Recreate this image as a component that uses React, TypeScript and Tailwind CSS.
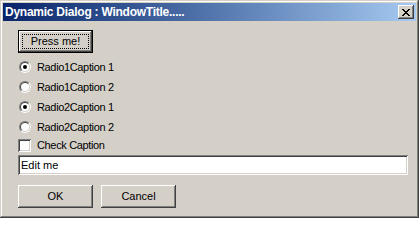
import React, { useState } from "react";

const font = { fontFamily: '"Liberation Sans", Arial, sans-serif' };

const raised =
  "shadow-[inset_-1px_-1px_0_#404040,inset_1px_1px_0_#ffffff,inset_-2px_-2px_0_#808080]";
const sunken =
  "shadow-[inset_1px_1px_0_#808080,inset_-1px_-1px_0_#ffffff,inset_2px_2px_0_#404040,inset_-2px_-2px_0_#d4d0c8]";

const Radio = ({ checked, label }: { checked: boolean; label: string }) => (
  <div className="flex items-center h-[20px]">
    <span className="ml-[1px] w-[12px] h-[12px] rounded-full border border-t-[#808080] border-l-[#808080] border-b-white border-r-white flex">
      <span className="w-[10px] h-[10px] rounded-full border border-t-[#404040] border-l-[#404040] border-b-[#d4d0c8] border-r-[#d4d0c8] bg-white flex items-center justify-center">
        {checked && <span className="w-[4px] h-[4px] rounded-full bg-black" />}
      </span>
    </span>
    <span className="ml-[6px] text-[11px] tracking-[-0.35px] text-black leading-none">{label}</span>
  </div>
);

export default function App() {
  const [text, setText] = useState("Edit me");

  return (
    <div
      style={font}
      className="w-[419px] h-[218px] bg-[#d4d0c8] p-[3px] flex flex-col shadow-[inset_-1px_-1px_0_#404040,inset_1px_1px_0_#d4d0c8,inset_-2px_-2px_0_#808080,inset_2px_2px_0_#ffffff]"
    >
      {/* Title bar */}
      <div className="h-[18px] flex items-center justify-between bg-gradient-to-r from-[#0a246a] to-[#a6caf0] pl-[2px] pr-[2px]">
        <span className="text-[12px] tracking-[-0.25px] font-bold text-white leading-none">
          Dynamic Dialog : WindowTitle.....
        </span>
        <button
          className={`w-[16px] h-[14px] bg-[#d4d0c8] flex items-center justify-center ${raised}`}
          aria-label="Close"
        >
          <svg width="8" height="7" viewBox="0 0 8 7" shapeRendering="crispEdges">
            <path
              d="M0 0h2v1H0zM6 0h2v1H6zM1 1h2v1H1zM5 1h2v1H5zM2 2h4v1H2zM3 3h2v1H3zM2 4h4v1H2zM1 5h2v1H1zM5 5h2v1H5zM0 6h2v1H0zM6 6h2v1H6z"
              fill="#000"
            />
          </svg>
        </button>
      </div>

      {/* Body */}
      <div className="flex flex-col pl-[15px] pr-[8px] pt-[9px]">
        <button className="w-[75px] h-[23px] border border-black bg-[#d4d0c8] p-0 flex">
          <span className={`flex-1 flex p-[3px] ${raised}`}>
            <span className="flex-1 border border-dotted border-black flex items-center justify-center text-[11px] text-black leading-none">
              Press me!
            </span>
          </span>
        </button>

        <div className="flex flex-col mt-[4px]">
          <Radio checked label="Radio1Caption 1" />
          <Radio checked={false} label="Radio1Caption 2" />
          <Radio checked label="Radio2Caption 1" />
          <div className="-mb-[1px]">
            <Radio checked={false} label="Radio2Caption 2" />
          </div>
          <div className="flex items-center h-[19px]">
            <span className={`w-[13px] h-[13px] bg-white ${sunken}`} />
            <span className="ml-[6px] text-[11px] tracking-[-0.35px] text-black leading-none">
              Check Caption
            </span>
          </div>
        </div>

        <input
          value={text}
          onChange={(e) => setText(e.target.value)}
          className={`h-[20px] w-full bg-white pl-[3px] text-[11px] text-black outline-none ${sunken}`}
          style={font}
        />

        <div className="flex gap-[8px] mt-[10px]">
          <button className={`w-[75px] h-[23px] bg-[#d4d0c8] text-[11px] text-black ${raised}`}>
            OK
          </button>
          <button className={`w-[75px] h-[23px] bg-[#d4d0c8] text-[11px] text-black ${raised}`}>
            Cancel
          </button>
        </div>
      </div>
    </div>
  );
}
